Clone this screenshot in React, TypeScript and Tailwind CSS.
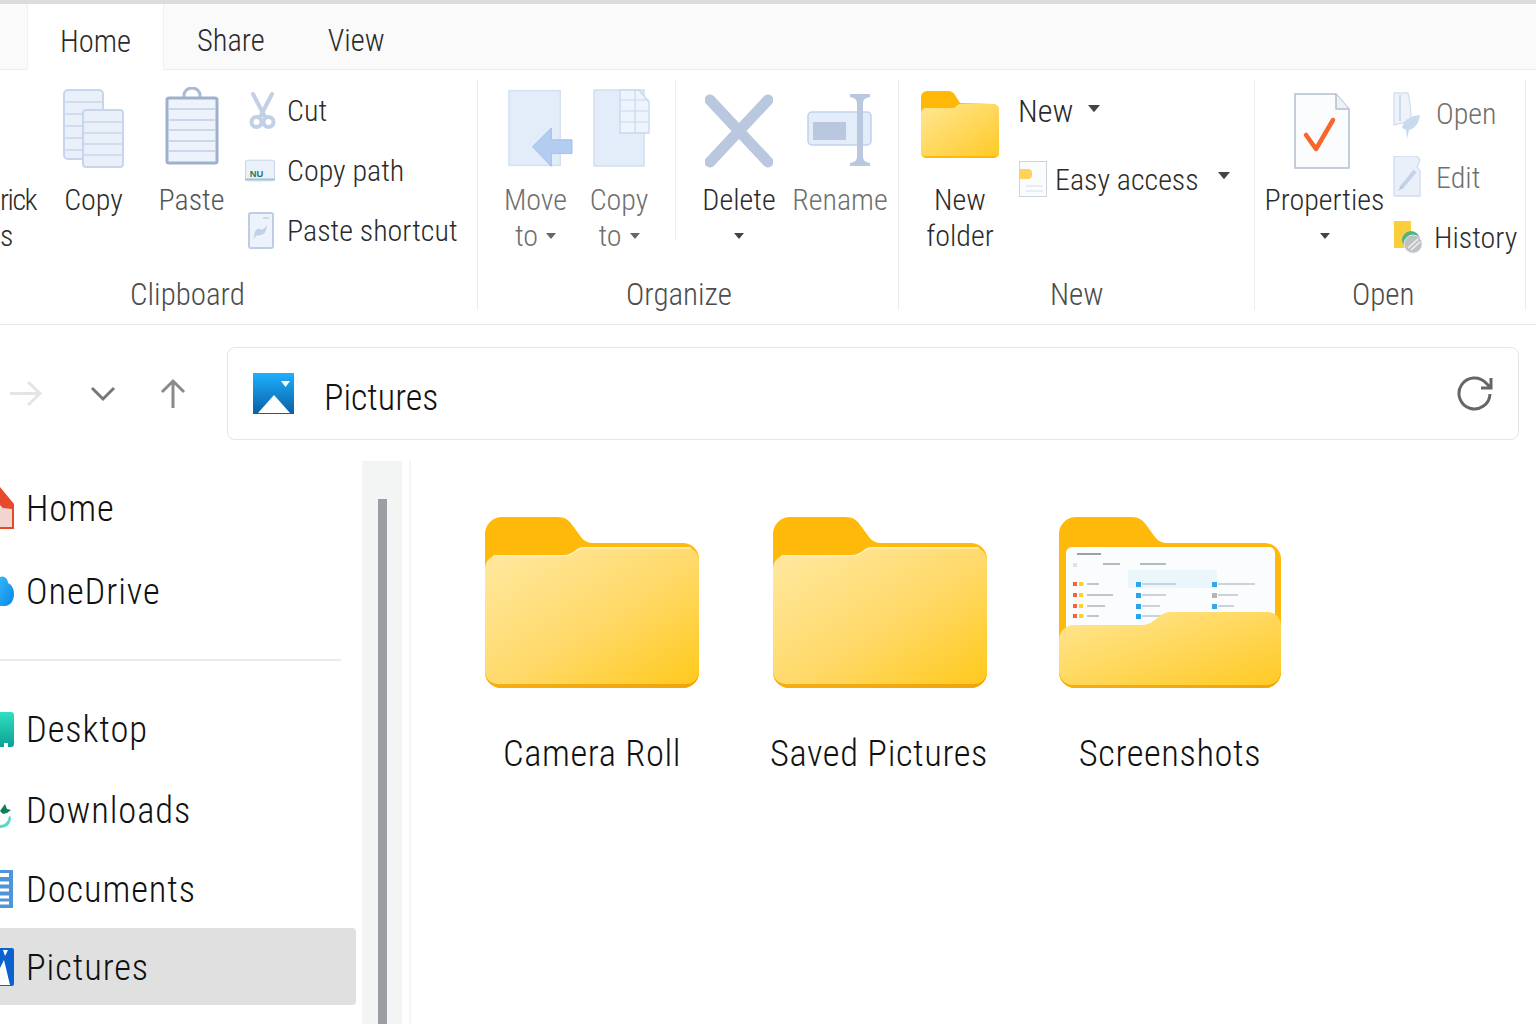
import React from "react";

const Caret = ({ color = "#444", w = 10 }: { color?: string; w?: number }) => (
  <svg width={w} height={w * 0.6} viewBox="0 0 10 6" className="inline-block"><path d="M0 0h10L5 6z" fill={color} /></svg>
);

const LargeCol = ({ icon, lines, width, tone = "text-[#2b2b2b]", caret, caretOwnLine, iconClass = "" }: { icon: React.ReactNode; lines: string[]; width: number; tone?: string; caret?: boolean; caretOwnLine?: boolean; iconClass?: string }) => (
  <div className={`flex flex-col items-center shrink-0 ${tone}`} style={{ width }}>
    <div className={`h-[112px] w-full flex items-start justify-center pt-[20px] ${iconClass}`}>{icon}</div>
    {lines.map((l, i) => (
      <div key={l} className="h-[36px] leading-[36px] text-[30px] whitespace-nowrap flex items-center gap-[8px]">
        {l}
        {caret && i === lines.length - 1 && !caretOwnLine && <Caret color="#666" />}
      </div>
    ))}
    {caretOwnLine && <div className="h-[36px] flex items-center"><Caret /></div>}
  </div>
);

const SmallRow = ({ icon, text, tone = "text-[#2b2b2b]", iconW = 42, caret, start }: { icon: React.ReactNode; text: string; tone?: string; iconW?: number; caret?: boolean; start?: boolean }) => (
  <div className={`h-[60px] flex items-center text-[30px] whitespace-nowrap ${tone}`}>
    <div className={`flex shrink-0 ${start ? "justify-start" : "justify-center"}`} style={{ width: iconW }}>{icon}</div>
    {text}
    {caret && <span className="ml-[19px] mb-[6px] flex"><Caret w={12} /></span>}
  </div>
);

const CopyIcon = () => (
  <svg width="62" height="80" viewBox="0 0 62 80" fill="#e9f0fa" stroke="#c7d6ec" strokeWidth="2" className="-mt-[2px]">
    <rect x="1" y="2" width="39" height="69" rx="4" />
    <path d="M2 14h37M2 26h37M2 38h37M2 50h37M2 62h37" strokeWidth="1.3" />
    <rect x="20" y="22" width="40" height="57" rx="3" />
    <path d="M21 34h38M21 45h38M21 56h38M21 67h38" strokeWidth="1.3" />
  </svg>
);
const PasteIcon = () => (
  <svg width="54" height="78" viewBox="0 0 54 78" className="-mt-[3px]">
    <path d="M19 11V8a8 7 0 0 1 16 0v3" fill="none" stroke="#a9bad3" strokeWidth="3" />
    <rect x="2" y="11" width="50" height="65" rx="2" fill="#edf2fb" stroke="#9db1cd" strokeWidth="3" />
    <path d="M3 22h48M3 33h48M3 43h48M3 54h48M3 64h48" stroke="#c0cfe5" strokeWidth="1.5" />
  </svg>
);
const CutIcon = () => (
  <svg width="27" height="37" viewBox="0 0 27 37" fill="none" stroke="#c1d0e6" strokeWidth="4" className="mr-[8px]">
    <path d="M4 2l12 23M23 2L11 25" strokeLinecap="round" />
    <circle cx="7.5" cy="30" r="5" />
    <circle cx="19.5" cy="30" r="5" />
  </svg>
);
const CopyPathIcon = () => (
  <svg width="32" height="23" viewBox="0 0 32 23" className="mr-[12px]">
    <rect x="0.5" y="0.5" width="31" height="22" rx="2" fill="#eaf1f8" stroke="#c2d3e6" />
    <path d="M0 21h32" stroke="#a9c1d9" strokeWidth="2" />
    <text x="5" y="18" fontSize="10" fontWeight="700" fill="#1e7d5e" fontFamily="Liberation Sans, sans-serif">NU</text>
  </svg>
);
const PasteShortcutIcon = () => (
  <svg width="26" height="37" viewBox="0 0 26 37" className="mr-[10px]">
    <rect x="1" y="1" width="24" height="35" rx="2" fill="#edf3fb" stroke="#bccde5" strokeWidth="2" />
    <path d="M6 27c0-9 3-11 6-10s3 1 7-4c-1 7-2 9-6 10s-4-1-7 4z" fill="#c3d1e6" />
    <path d="M15 6h6" stroke="#c3d1e6" strokeWidth="1.500" />
  </svg>
);
const MoveIcon = () => (
  <svg width="66" height="78" viewBox="0 0 66 78" className="ml-[10px] -mt-[1px]">
    <rect x="1" y="1" width="52" height="76" fill="#e3edf9" stroke="#d3e1f4" strokeWidth="1.5" />
    <path d="M25 58L44 39v12h21v14H44v13z" fill="#b3cdf1" stroke="#a4c0e8" />
  </svg>
);
const CopyToIcon = () => (
  <svg width="58" height="78" viewBox="0 0 58 78" className="ml-[5px] -mt-[1px]">
    <rect x="1" y="1" width="50" height="76" fill="#e3edf9" stroke="#cfdef2" strokeWidth="1.5" />
    <path d="M27 1h19l10 12v31H27z" fill="#eef4fc" stroke="#c6d7ee" strokeWidth="1.3" />
    <path d="M27 11h29M27 22h29M27 33h29M42 1v43" stroke="#c6d7ee" strokeWidth="1.2" />
  </svg>
);
const DeleteIcon = () => (
  <svg width="68" height="74" viewBox="0 0 68 74" stroke="#b9c8de" strokeWidth="11" strokeLinecap="round" className="mt-[4px]"><path d="M5 6l58 62M63 6L5 68" /></svg>
);
const RenameIcon = () => (
  <svg width="66" height="74" viewBox="0 0 66 74" className="mt-[3px]">
    <rect x="1" y="19" width="63" height="33" rx="4" fill="#e3edf9" stroke="#bfd2ec" strokeWidth="1.5" />
    <rect x="6" y="29" width="33" height="18" fill="#b9c8de" />
    <path d="M43 1h20v3c-6 1-7 3-7 8v50c0 5 1 7 7 8v3H43v-3c6-1 7-3 7-8V12c0-5-1-7-7-8z" fill="#b9c8de" />
  </svg>
);
const SmallFolder = () => (
  <svg width="78" height="67" viewBox="0 0 78 67" className="mt-[1px]">
    <defs>
      <linearGradient id="sf" x1="0" y1="0" x2="1" y2="1"><stop offset="0" stopColor="#ffe793" /><stop offset="1" stopColor="#ffca28" /></linearGradient>
    </defs>
    <path d="M0 6a6 6 0 0 1 6-6h21c3 0 5 1 7 4l5 8 33 1a6 6 0 0 1 6 6v43a5 5 0 0 1-5 5H5a5 5 0 0 1-5-5z" fill="#ffb805" />
    <path d="M0 22a5 5 0 0 1 5-5h28l5-4 34 0a6 6 0 0 1 6 6v42a4 4 0 0 1-4 4H4a4 4 0 0 1-4-4z" fill="url(#sf)" />
  </svg>
);
const EasyIcon = () => (
  <svg width="28" height="36" viewBox="0 0 28 36" className="ml-[2px]">
    <rect x="0.5" y="0.5" width="27" height="35" fill="#fbfcfe" stroke="#ccd3dc" />
    <path d="M0 8h9a4 4 0 0 1 4 4v2a4 4 0 0 1-4 4H0z" fill="#ffd25c" />
    <path d="M7 25h17M7 30h17" stroke="#d6dde6" />
  </svg>
);
const PropsIcon = () => (
  <svg width="56" height="76" viewBox="0 0 56 76" className="mt-[3px] mr-[6px]">
    <path d="M1 1h41l13 15v59H1z" fill="#fbfcfe" stroke="#b3bfce" strokeWidth="1.5" />
    <path d="M42 1v15h13" fill="#eef2f7" stroke="#b3bfce" strokeWidth="1.5" />
    <path d="M12 42l10 14 17-29" fill="none" stroke="#f9662a" strokeWidth="4.500" strokeLinecap="round" strokeLinejoin="round" />
  </svg>
);
const OpenIcon = () => (
  <svg width="28" height="48" viewBox="0 0 28 48" className="mt-[6px]">
    <path d="M1 1h14c2 8 3 20 3 28l-17 4z" fill="#eef3fb" stroke="#d3dfef" strokeWidth="1.3" />
    <path d="M7 3v26" stroke="#cddaec" strokeWidth="2" />
    <path d="M9 36c2-10 10-12 18-13-1 9-6 14-11 15l-2 9-1-9z" fill="#c9d9ee" />
  </svg>
);
const EditIcon = () => (
  <svg width="28" height="42" viewBox="0 0 28 42">
    <path d="M2 0h22l3 4-3 7 3 4v25H2a1 1 0 0 1-1-1V1z" fill="#eaf0fa" stroke="#d0dcee" strokeWidth="1.3" />
    <path d="M8 32l14-17" stroke="#c3d2e8" strokeWidth="4" />
    <path d="M5 35l3-5 2 2z" fill="#b6c6de" />
  </svg>
);
const HistoryIcon = () => (
  <svg width="32" height="34" viewBox="0 0 32 34">
    <rect x="1" y="1" width="17" height="27" fill="#fbcf3c" />
    <circle cx="18" cy="20" r="9" fill="#4cb583" />
    <circle cx="20" cy="24" r="9" fill="#bfc2c4" stroke="#e6e6e6" />
    <path d="M15 28l10-9M18 30l9-8" stroke="#f2f2f2" strokeWidth="1.500" />
  </svg>
);
const PicIcon = ({ size = 42 }: { size?: number }) => (
  <svg width={size} height={size} viewBox="0 0 42 42">
    <defs><linearGradient id="pic" x1="0" y1="0" x2="0" y2="1"><stop offset="0" stopColor="#1db1fd" /><stop offset="1" stopColor="#0a5ea6" /></linearGradient></defs>
    <rect width="41" height="41" fill="url(#pic)" />
    <path d="M5 40l16-18 16 18z" fill="#fff" />
    <path d="M28 8h9l-4.500 6z" fill="#fff" />
  </svg>
);

const FolderBack = ({ w }: { w: number }) => (
  <path d={`M0 17A17 17 0 0 1 17 0H72C80 0 84 3 88 9L96 20C99 24 103 26 108 26H${w - 16}A16 16 0 0 1 ${w} 42V155A16 16 0 0 1 ${w - 16} 171H16A16 16 0 0 1 0 155Z`} fill="#ffb90b" />
);
const BottomLip = ({ w, id }: { w: number; id: string }) => (
  <path d={`M0 150V155A16 16 0 0 0 16 171H${w - 16}A16 16 0 0 0 ${w} 155V150Z`} fill={`url(#${id})`} />
);
const Folder = ({ id }: { id: string }) => (
  <svg width="214" height="171" viewBox="0 0 214 171">
    <defs>
      <linearGradient id={id} x1="0" y1="0" x2="1" y2="1"><stop offset="0" stopColor="#ffe9a3" /><stop offset="0.55" stopColor="#ffd968" /><stop offset="1" stopColor="#ffc91c" /></linearGradient>
      <linearGradient id={`${id}l`} x1="0" y1="0" x2="1" y2="0"><stop offset="0" stopColor="#f7ae11" /><stop offset="1" stopColor="#f0a50a" /></linearGradient>
    </defs>
    <FolderBack w={214} />
    <BottomLip w={214} id={`${id}l`} />
    <path d="M0 52A14 14 0 0 1 14 38H78C82 38 85 37 88 35L94 31C96 30 98 30 101 30H200A14 14 0 0 1 214 44V154A13 13 0 0 1 201 167H13A13 13 0 0 1 0 154Z" fill={`url(#${id})`} />
    <path d="M8 39H78C82 39 85 38 88 36L94 32C96 31 98 31 101 31H206" fill="none" stroke="#ffefbc" strokeWidth="1.500" />
  </svg>
);
const ShotFolder = () => {
  const rows = [65, 76, 87, 97];
  return (
    <svg width="222" height="171" viewBox="0 0 222 171">
      <defs>
        <linearGradient id="sh" x1="0" y1="0" x2="1" y2="1"><stop offset="0" stopColor="#ffe695" /><stop offset="1" stopColor="#ffca24" /></linearGradient>
        <linearGradient id="shl" x1="0" y1="0" x2="1" y2="0"><stop offset="0" stopColor="#f7ae11" /><stop offset="1" stopColor="#f0a50a" /></linearGradient>
      </defs>
      <FolderBack w={222} />
      <BottomLip w={222} id="shl" />
      <path d="M7 36a6 6 0 0 1 6-6H210a6 6 0 0 1 6 6V112H7Z" fill="#fbfcfe" />
      <g className="blur-[0.5px]">
        <rect x="69" y="53" width="89" height="18" fill="#eaf5fc" />
        <rect x="18" y="36" width="24" height="2" fill="#9aa0a6" />
        <rect x="14" y="46" width="4" height="4" fill="#d3e4f3" />
        <rect x="44" y="46" width="17" height="2" fill="#b5bbc2" />
        <rect x="81" y="46" width="26" height="2" fill="#b5bbc2" />
        {rows.map((y, i) => (
          <g key={y}>
            <rect x="14" y={y} width="4" height="4" fill="#f7623a" />
            <rect x="20" y={y} width="4" height="4" fill="#ffd21f" />
            <rect x="28" y={y + 1} width={[12, 26, 18, 12][i]} height="2" fill="#c2c6cb" />
            <rect x="77" y={y} width="5" height="5" fill="#2aa4ee" />
            <rect x="83" y={y + 1} width={[34, 24, 18, 20][i]} height="2" fill="#c8d3dc" />
            {i < 3 && <rect x="153" y={y} width="5" height="5" fill={["#3ba5e6", "#b5b5b5", "#3ba5e6"][i]} />}
            {i < 3 && <rect x="159" y={y + 1} width={[37, 20, 16][i]} height="2" fill="#c8d3dc" />}
          </g>
        ))}
      </g>
      <path d="M0 123A15 15 0 0 1 15 108H82C87 108 90 107 93 105L101 99C104 96 108 95 112 95H208A14 14 0 0 1 222 109V154A14 14 0 0 1 208 168H14A14 14 0 0 1 0 154Z" fill="url(#sh)" />
    </svg>
  );
};

const NavRow = ({ icon, label, h, active, className = "" }: { icon: React.ReactNode; label: string; h: number; active?: boolean; className?: string }) => (
  <div className={`flex items-center gap-[13px] text-[36.5px] tracking-[0.9px] text-[#111] ${active ? "bg-[#e0e0e0] rounded-r-[4px] w-[356px]" : ""} ${className}`} style={{ height: h }}>
    <div className="w-[14px] flex justify-end">{icon}</div>
    <span className="pt-[3px] -ml-[1px]">{label}</span>
  </div>
);

const Divider = () => <div className="w-px bg-[#ececec] mt-[10px] h-[230px] shrink-0" />;

const GroupLabel = ({ text, ml }: { text: string; ml: number }) => (
  <div className="absolute top-[205px] text-[31px] leading-[40px] text-[#4d4d4d] whitespace-nowrap" style={{ left: ml }}>{text}</div>
);

export default function App() {
  return (
    <div className="w-[1536px] h-[1024px] overflow-hidden bg-white flex flex-col font-['Roboto',sans-serif] font-stretch-[85%] font-light">
      <div className="h-[4px] bg-[#dcdcdc] shrink-0" />
      <div className="h-[66px] shrink-0 bg-[#fafafa] border-b border-[#ececec] flex pl-[27px] text-[30.5px] text-[#2b2b2b]">
        <div className="w-[137px] h-[66px] bg-white border-x border-[#f0f0f0] flex items-center justify-center pt-[9px]">Home</div>
        <div className="ml-[33px] flex items-center pt-[9px]">Share</div>
        <div className="ml-[63px] flex items-center pt-[9px]">View</div>
      </div>

      <div className="h-[255px] shrink-0 border-b border-[#e6e6e6] flex">
        {/* Clipboard */}
        <div className="relative w-[477px] shrink-0 flex">
          <GroupLabel text="Clipboard" ml={130} />
          <div className="w-[50px] shrink-0 pt-[112px] text-[30px] leading-[36px] text-[#2b2b2b]">
            <div className="tracking-[-1.5px]">rick</div>
            <div>s</div>
          </div>
          <LargeCol width={87} icon={<CopyIcon />} lines={["Copy"]} />
          <LargeCol width={109} icon={<PasteIcon />} lines={["Paste"]} tone="text-[#555]" />
          <div className="pt-[10px] -ml-[1px]">
            <SmallRow icon={<CutIcon />} text="Cut" />
            <SmallRow icon={<CopyPathIcon />} text="Copy path" />
            <SmallRow icon={<PasteShortcutIcon />} text="Paste shortcut" />
          </div>
        </div>
        <div className="w-px bg-[#ececec] mt-[10px] h-[230px] shrink-0" />
        {/* Organize */}
        <div className="relative w-[420px] shrink-0 flex">
          <GroupLabel text="Organize" ml={148} />
          <div className="w-[20px] shrink-0" />
          <LargeCol width={75} icon={<MoveIcon />} lines={["Move", "to"]} caret tone="text-[#6f6f6f]" />
          <LargeCol width={92} icon={<CopyToIcon />} lines={["Copy", "to"]} caret tone="text-[#6f6f6f]" />
          <div className="w-[10px] shrink-0" />
          <div className="w-px shrink-0 bg-[#eeeeee] mt-[10px] h-[160px]" />
          <div className="w-[7px] shrink-0" />
          <LargeCol width={112} icon={<DeleteIcon />} lines={["Delete"]} caretOwnLine />
          <LargeCol width={90} icon={<RenameIcon />} lines={["Rename"]} tone="text-[#6f6f6f]" />
        </div>
        <Divider />
        {/* New */}
        <div className="relative w-[355px] shrink-0 flex">
          <GroupLabel text="New" ml={151} />
          <div className="w-[20px] shrink-0" />
          <LargeCol width={82} icon={<SmallFolder />} lines={["New", "folder"]} />
          <div className="pt-[11px] pl-[17px]">
            <div className="h-[60px] flex items-center text-[32px] text-[#2b2b2b]">New<span className="ml-[15px] mb-[4px] flex"><Caret w={12} /></span></div>
            <div className="mt-[8px] -ml-[1px]">
              <SmallRow icon={<EasyIcon />} text="Easy access" iconW={38} caret start />
            </div>
          </div>
        </div>
        <Divider />
        {/* Open */}
        <div className="relative w-[270px] shrink-0 flex">
          <GroupLabel text="Open" ml={97} />
          <div className="w-[7px] shrink-0" />
          <LargeCol width={125} icon={<PropsIcon />} lines={["Properties"]} caretOwnLine />
          <div className="pt-[13px] ml-[6px]">
            <SmallRow icon={<OpenIcon />} text="Open" iconW={43} tone="text-[#6f6f6f]" start />
            <div className="h-[4px]" />
            <SmallRow icon={<EditIcon />} text="Edit" iconW={43} tone="text-[#6f6f6f]" start />
            <SmallRow icon={<HistoryIcon />} text="History" iconW={41} start />
          </div>
        </div>
        <Divider />
      </div>

      <div className="h-[136px] shrink-0 flex items-start pt-[22px]">
        <div className="w-[227px] h-[93px] shrink-0 flex items-center">
          <svg className="ml-[9px]" width="33" height="27" viewBox="0 0 33 27" fill="none" stroke="#e4e4e4" strokeWidth="3"><path d="M1 13.500h30M19 2l12 11.500L19 25" /></svg>
          <svg className="ml-[48px]" width="26" height="16" viewBox="0 0 26 16" fill="none" stroke="#777" strokeWidth="3"><path d="M2 2l11 11L24 2" /></svg>
          <svg className="ml-[44px]" width="26" height="31" viewBox="0 0 26 31" fill="none" stroke="#8a8a8a" strokeWidth="3"><path d="M13 30V3M2 14L13 3l11 11" /></svg>
        </div>
        <div className="w-[1292px] h-[93px] shrink-0 border border-[#e5e5e5] rounded-[8px] flex items-center pl-[25px] pr-[24px] text-[36px] text-[#111]">
          <PicIcon />
          <span className="ml-[29px] pt-[8px]">Pictures</span>
          <svg className="ml-auto mr-[-1px]" width="38" height="38" viewBox="0 0 38 38" fill="none" stroke="#666" strokeWidth="3"><path d="M33 19a15.500 15.500 0 1 1-4-11l5 5M34 3v10H24" /></svg>
        </div>
      </div>

      <div className="flex-1 flex min-h-0">
        <div className="w-[362px] shrink-0 pt-[7px]">
          <NavRow h={80} label="Home" icon={
            <svg width="14" height="42" viewBox="0 0 14 42"><path d="M0 0l14 17v25H0z" fill="#e64a2a" /><path d="M0 18l3 3 9 1v18H0z" fill="#f1d6d0" /></svg>
          } />
          <NavRow h={80} label="OneDrive" className="mt-[3px]" icon={
            <svg width="14" height="30" viewBox="0 0 14 30"><defs><linearGradient id="od" x1="0" y1="0" x2="1" y2="1"><stop offset="0" stopColor="#33b6f7" /><stop offset="1" stopColor="#0a84e8" /></linearGradient></defs><path d="M0 30V1c4-2 8 2 8 6 4 2 6 6 6 11 0 7-4 12-9 12z" fill="url(#od)" /></svg>
          } />
          <div className="h-[2px] w-[341px] bg-[#ebebeb] mt-[28px]" />
          <NavRow h={80} label="Desktop" className="mt-[28px]" icon={
            <svg width="14" height="35" viewBox="0 0 14 35"><defs><linearGradient id="dt" x1="0" y1="0" x2="0" y2="1"><stop offset="0" stopColor="#2fe0c0" /><stop offset="1" stopColor="#0f9f95" /></linearGradient></defs><path d="M0 0h11a3 3 0 0 1 3 3v29a3 3 0 0 1-3 3H8v-4H4v4H0z" fill="url(#dt)" /></svg>
          } />
          <NavRow h={80} label="Downloads" className="mt-[1px]" icon={
            <svg width="11" height="25" viewBox="0 0 11 25" className="mr-[3px] mt-[10px]"><path d="M0 8l5-7 2 5 4 1-4 3-4 1z" fill="#0c7e5a" /><path d="M0 22c5 0 8-3 9-9l2 1c0 7-4 11-11 11z" fill="#54dcc4" /></svg>
          } />
          <NavRow h={78} label="Documents" icon={
            <svg width="13" height="38" viewBox="0 0 13 38" className="mr-[1px]"><rect x="-4" y="0" width="17" height="38" fill="#4e96d8" /><rect x="-4" y="3" width="13" height="4" fill="#fff" /><path d="M0 13h9M0 20h9M0 27h9M0 33h9" stroke="#fff" strokeWidth="3" /></svg>
          } />
          <NavRow h={77} label="Pictures" active icon={
            <svg width="14" height="38" viewBox="0 0 14 38"><rect x="-4" width="18" height="38" rx="2" fill="#0c63cf" /><path d="M0 37V20l4-8 6 25z" fill="#fff" /><path d="M3 2h5L5 8z" fill="#fff" /></svg>
          } />
        </div>
        <div className="w-[40px] shrink-0 bg-[#f3f4f4] pt-[38px] pl-[16px]">
          <div className="w-[9px] h-full bg-[#9b9ea2]" />
        </div>
        <div className="w-[7px] shrink-0" />
        <div className="w-[2px] shrink-0 bg-[#f5f5f5]" />
        <div className="flex-1 flex pl-[37px] pt-[56px] items-start text-[36.5px] tracking-[0.6px] text-[#111]">
          <div className="w-[288px] flex flex-col items-center">
            <Folder id="f1" />
            <div className="mt-[44px] leading-[44px]">Camera Roll</div>
          </div>
          <div className="w-[288px] flex flex-col items-center">
            <Folder id="f2" />
            <div className="mt-[44px] leading-[44px] -ml-[2px]">Saved Pictures</div>
          </div>
          <div className="w-[292px] flex flex-col items-center">
            <ShotFolder />
            <div className="mt-[44px] leading-[44px]">Screenshots</div>
          </div>
        </div>
      </div>
    </div>
  );
}
